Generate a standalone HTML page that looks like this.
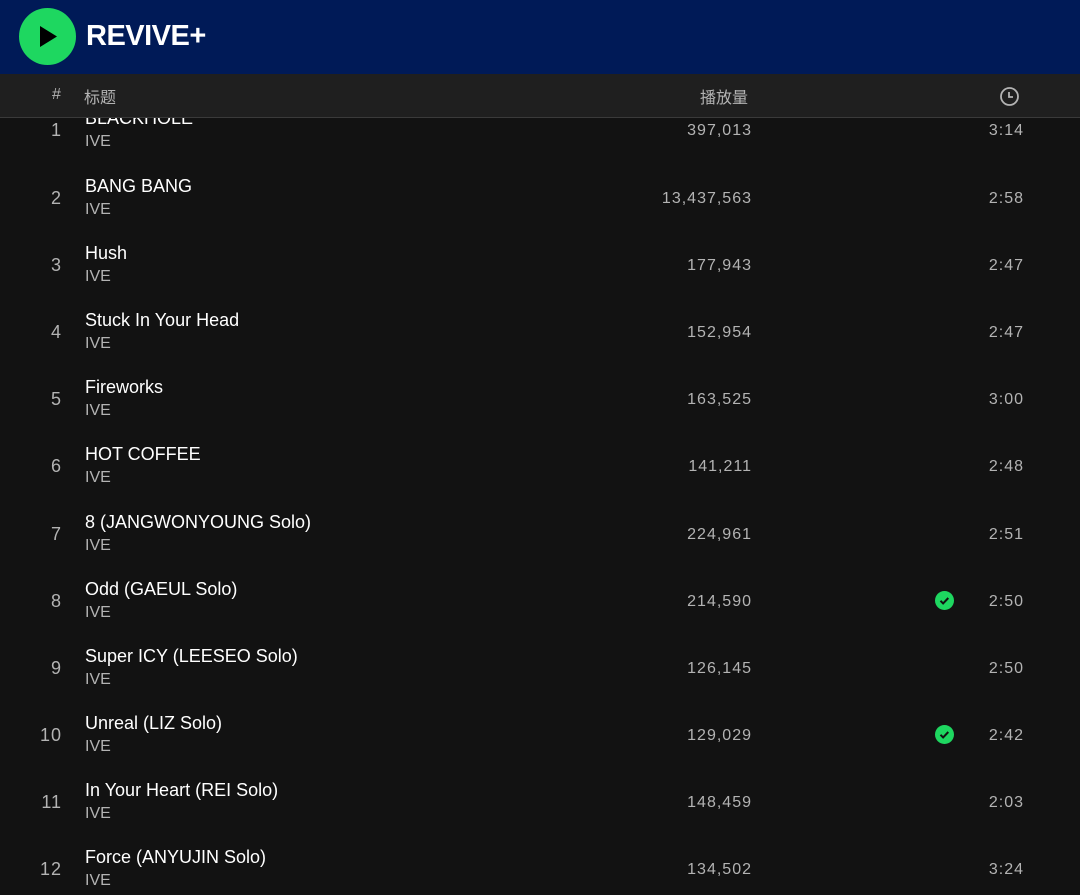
<!DOCTYPE html>
<html><head><meta charset="utf-8"><style>
*{margin:0;padding:0;box-sizing:border-box}
body{width:1080px;height:895px;background:#121212;overflow:hidden;font-family:"Liberation Sans","Noto Sans CJK SC",sans-serif;color:#fff;position:relative}
.top{position:absolute;left:0;top:0;width:1080px;height:74px;background:#001a57}
.play{position:absolute;left:19px;top:8px;width:57px;height:57px;border-radius:50%;background:#1ed760}
.logo{position:absolute;left:86px;top:20px;font-size:29px;font-weight:bold;letter-spacing:-0.5px}
.th{position:absolute;left:0;top:74px;width:1080px;height:44px;background:#1f1f1f;border-bottom:1px solid #3a3a3a;color:#b3b3b3;font-size:16px}
.list{position:absolute;left:0;top:118px;width:1080px;height:777px;overflow:hidden}
.rows{position:absolute;left:0;top:-21.6px;width:1080px}
.row{position:relative;height:67.2px}
.row div{position:absolute}
.m{letter-spacing:1px}
.n{right:1018px;top:24px;font-size:18px;color:#b3b3b3}
.t{left:85px;top:12px;font-size:18px;color:#fff}
.a{left:85px;top:37px;font-size:16px;color:#b3b3b3}
.p{right:328px;top:26px;font-size:16px;color:#b3b3b3}
.d{right:56px;top:26px;font-size:16px;color:#b3b3b3}
.c{left:935px;top:24px;width:19px;height:19px;border-radius:50%;background:#1ed760}
</style></head><body>
<div class="top"><div class="play"><svg width="57" height="57"><polygon points="21,18 21,39 38,28.5" fill="#000"/></svg></div><div class="logo">REVIVE+</div></div>
<div class="th"><span style="position:absolute;left:52px;top:12px">#</span><span style="position:absolute;left:84px;top:10px">标题</span><span style="position:absolute;left:700px;top:10px">播放量</span>
<svg style="position:absolute;left:999px;top:12px" width="21" height="21" viewBox="0 0 21 21"><circle cx="10.5" cy="10.5" r="8.5" fill="none" stroke="#b3b3b3" stroke-width="1.8"/><path d="M10 6v5h4" fill="none" stroke="#b3b3b3" stroke-width="1.8"/></svg></div>
<div class="list"><div class="rows">
<div class="row"><div class="n m">1</div><div class="t">BLACKHOLE</div><div class="a">IVE</div><div class="p m">397,013</div><div class="d m">3:14</div></div>
<div class="row"><div class="n m">2</div><div class="t">BANG BANG</div><div class="a">IVE</div><div class="p m">13,437,563</div><div class="d m">2:58</div></div>
<div class="row"><div class="n m">3</div><div class="t">Hush</div><div class="a">IVE</div><div class="p m">177,943</div><div class="d m">2:47</div></div>
<div class="row"><div class="n m">4</div><div class="t">Stuck In Your Head</div><div class="a">IVE</div><div class="p m">152,954</div><div class="d m">2:47</div></div>
<div class="row"><div class="n m">5</div><div class="t">Fireworks</div><div class="a">IVE</div><div class="p m">163,525</div><div class="d m">3:00</div></div>
<div class="row"><div class="n m">6</div><div class="t">HOT COFFEE</div><div class="a">IVE</div><div class="p m">141,211</div><div class="d m">2:48</div></div>
<div class="row"><div class="n m">7</div><div class="t">8 (JANGWONYOUNG Solo)</div><div class="a">IVE</div><div class="p m">224,961</div><div class="d m">2:51</div></div>
<div class="row"><div class="n m">8</div><div class="t">Odd (GAEUL Solo)</div><div class="a">IVE</div><div class="p m">214,590</div><div class="c"><svg width="19" height="19"><path d="M5.5 9.8l2.6 2.6 5.2-5.4" fill="none" stroke="#121212" stroke-width="2"/></svg></div><div class="d m">2:50</div></div>
<div class="row"><div class="n m">9</div><div class="t">Super ICY (LEESEO Solo)</div><div class="a">IVE</div><div class="p m">126,145</div><div class="d m">2:50</div></div>
<div class="row"><div class="n m">10</div><div class="t">Unreal (LIZ Solo)</div><div class="a">IVE</div><div class="p m">129,029</div><div class="c"><svg width="19" height="19"><path d="M5.5 9.8l2.6 2.6 5.2-5.4" fill="none" stroke="#121212" stroke-width="2"/></svg></div><div class="d m">2:42</div></div>
<div class="row"><div class="n m">11</div><div class="t">In Your Heart (REI Solo)</div><div class="a">IVE</div><div class="p m">148,459</div><div class="d m">2:03</div></div>
<div class="row"><div class="n m">12</div><div class="t">Force (ANYUJIN Solo)</div><div class="a">IVE</div><div class="p m">134,502</div><div class="d m">3:24</div></div>
</div></div>
</body></html>
